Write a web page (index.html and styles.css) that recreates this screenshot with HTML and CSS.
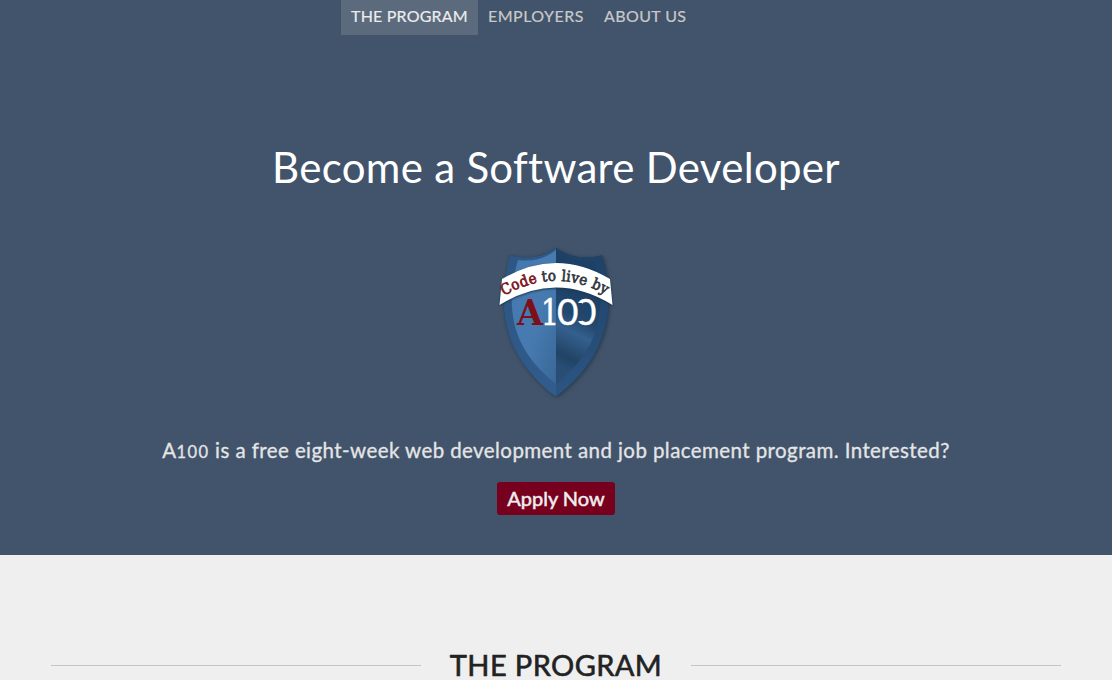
FILE: index.html
```html
<!DOCTYPE html>
<html lang="en">
<head>
<meta charset="utf-8">
<title>A100 – Become a Software Developer</title>
<link rel="stylesheet" href="styles.css">
</head>
<body>
<header class="hero">
  <nav class="nav">
    <a class="nav-link active">THE PROGRAM</a>
    <a class="nav-link employers">EMPLOYERS</a>
    <a class="nav-link about">ABOUT US</a>
  </nav>
  <h1 class="title">Become a Software Developer</h1>
  <svg class="shield" width="132" height="160" viewBox="0 0 132 160" role="img" aria-label="A100 shield">
    <defs>
      <linearGradient id="rimLeft" x1="0" y1="0" x2="1" y2="1">
        <stop offset="0" stop-color="#2d5684"/><stop offset="1" stop-color="#315c8c"/>
      </linearGradient>
      <linearGradient id="rimRight" x1="0" y1="0" x2="0" y2="1">
        <stop offset="0" stop-color="#1d4166"/><stop offset="1" stop-color="#2c5582"/>
      </linearGradient>
      <linearGradient id="faceLeft" x1="0" y1="0" x2="1" y2="1">
        <stop offset="0" stop-color="#4478b0"/><stop offset=".55" stop-color="#477bb0"/><stop offset="1" stop-color="#3a6798"/>
      </linearGradient>
      <linearGradient id="faceRight" gradientUnits="userSpaceOnUse" x1="98" y1="60" x2="66" y2="124">
        <stop offset="0" stop-color="#1d4166"/><stop offset=".3" stop-color="#24496f"/><stop offset=".5" stop-color="#34608f"/><stop offset=".85" stop-color="#214364"/><stop offset="1" stop-color="#284e76"/>
      </linearGradient>
      <path id="ribbonLine" d="M14 56Q66 25 120 57"/>
      <clipPath id="openZero"><path d="M86 50H110V90H86V81H92V63H86Z"/></clipPath>
    </defs>
    <path class="shield-shadow" d="M20 15.500Q46 22 66 8Q86 22 112 15.500C126 62 121 116 66 156.500C11 116 6 62 20 15.500Z"/>
    <path fill="url(#rimLeft)" d="M20 15.500Q46 22 66 8V156.500C11 116 6 62 20 15.500Z"/>
    <path fill="url(#rimRight)" d="M112 15.500Q86 22 66 8V156.500C121 116 126 62 112 15.500Z"/>
    <path fill="url(#faceLeft)" d="M28 20Q50 23 66 10V144C20 108 15 66 28 20Z"/>
    <path fill="url(#faceRight)" d="M104 20Q82 23 66 10V144C112 108 117 66 104 20Z"/>
    <path class="ribbon" d="M12 39Q66 7 120 39L122.500 65Q66 30 9.500 65Z"/>
    <text class="motto"><textPath href="#ribbonLine" textLength="107"><tspan class="red">Code</tspan> to live by</textPath></text>
    <text class="mark red" x="27" y="85" textLength="26" lengthAdjust="spacingAndGlyphs">A</text>
    <text class="mark one" x="51" y="85" textLength="18" lengthAdjust="spacingAndGlyphs">1</text>
    <text class="mark zero" x="67" y="85">0</text>
    <g clip-path="url(#openZero)"><text class="mark zero" x="85" y="85">0</text></g>
  </svg>
  <p class="intro">A<small>100</small> is a free eight-week web development and job placement program. Interested?</p>
  <a class="apply">Apply Now</a>
</header>
<main class="program">
  <h2 class="section-title">THE PROGRAM</h2>
</main>
</body>
</html>
```
FILE: styles.css
```css
* { box-sizing: border-box; }
body { margin: 0; background: #efefef; font-family: Lato, "Open Sans", sans-serif; overflow: hidden; }
.hero { height: 555px; background: #42546b; display: flex; flex-direction: column; align-items: center; }
.nav { display: flex; align-self: flex-start; margin-left: 341px; height: 35px; }
.nav-link { padding: 6px 10px 0; font-size: 16px; line-height: 19px; color: #c8c9ca; white-space: nowrap; -webkit-text-stroke: .2px currentColor; }
.nav-link.active { background: #5c6a7e; color: #ececec; letter-spacing: .2px; }
.employers { letter-spacing: .5px; }
.about { letter-spacing: .4px; }
.title { margin: 107px 0 0; font-size: 42px; line-height: 50px; font-weight: 400; letter-spacing: .3px; color: #fff; white-space: nowrap; }
.shield { margin-top: 48px; display: block; }
.shield-shadow { fill: #293b50; filter: drop-shadow(1px 1px 2px #26374a); }
.ribbon { fill: #fff; filter: drop-shadow(0 1px 1px #19334f); }
.motto { font: 15px "DejaVu Serif", serif; font-stretch: condensed; fill: #30353e; stroke: #30353e; stroke-width: .65px; }
.mark { font: bold 36px "DejaVu Serif", serif; }
.mark.one { fill: #fff; font-weight: 400; stroke: #fff; stroke-width: .6px; }
.mark.zero { fill: #fff; font: 400 37px Lato, sans-serif; stroke: #fff; stroke-width: .4px; }
.red { fill: #7b101b; }
.motto .red { stroke: #7b101b; }
.intro { margin: 37px 0 0; font-size: 20.500px; line-height: 26px; letter-spacing: .42px; color: #e4e5e6; white-space: nowrap; -webkit-text-stroke: .3px currentColor; }
.intro small { font-size: 16.500px; letter-spacing: 1.400px; }
.apply { margin-top: 17px; height: 33px; width: 118px; border-radius: 3px; background: #78001f; color: #eee; font-size: 20px; line-height: 33px; text-align: center; -webkit-text-stroke: .5px currentColor; }
.program { height: 125px; padding: 92px 51px 0; }
.section-title { margin: 0; display: flex; align-items: center; gap: 29px; font-size: 29px; line-height: 35px; letter-spacing: .4px; font-weight: 400; color: #222; white-space: nowrap; -webkit-text-stroke: .6px currentColor; }
.section-title::before, .section-title::after { content: ""; flex: 1; height: 1px; margin-top: 2px; background: #c4c4c4; }
```
